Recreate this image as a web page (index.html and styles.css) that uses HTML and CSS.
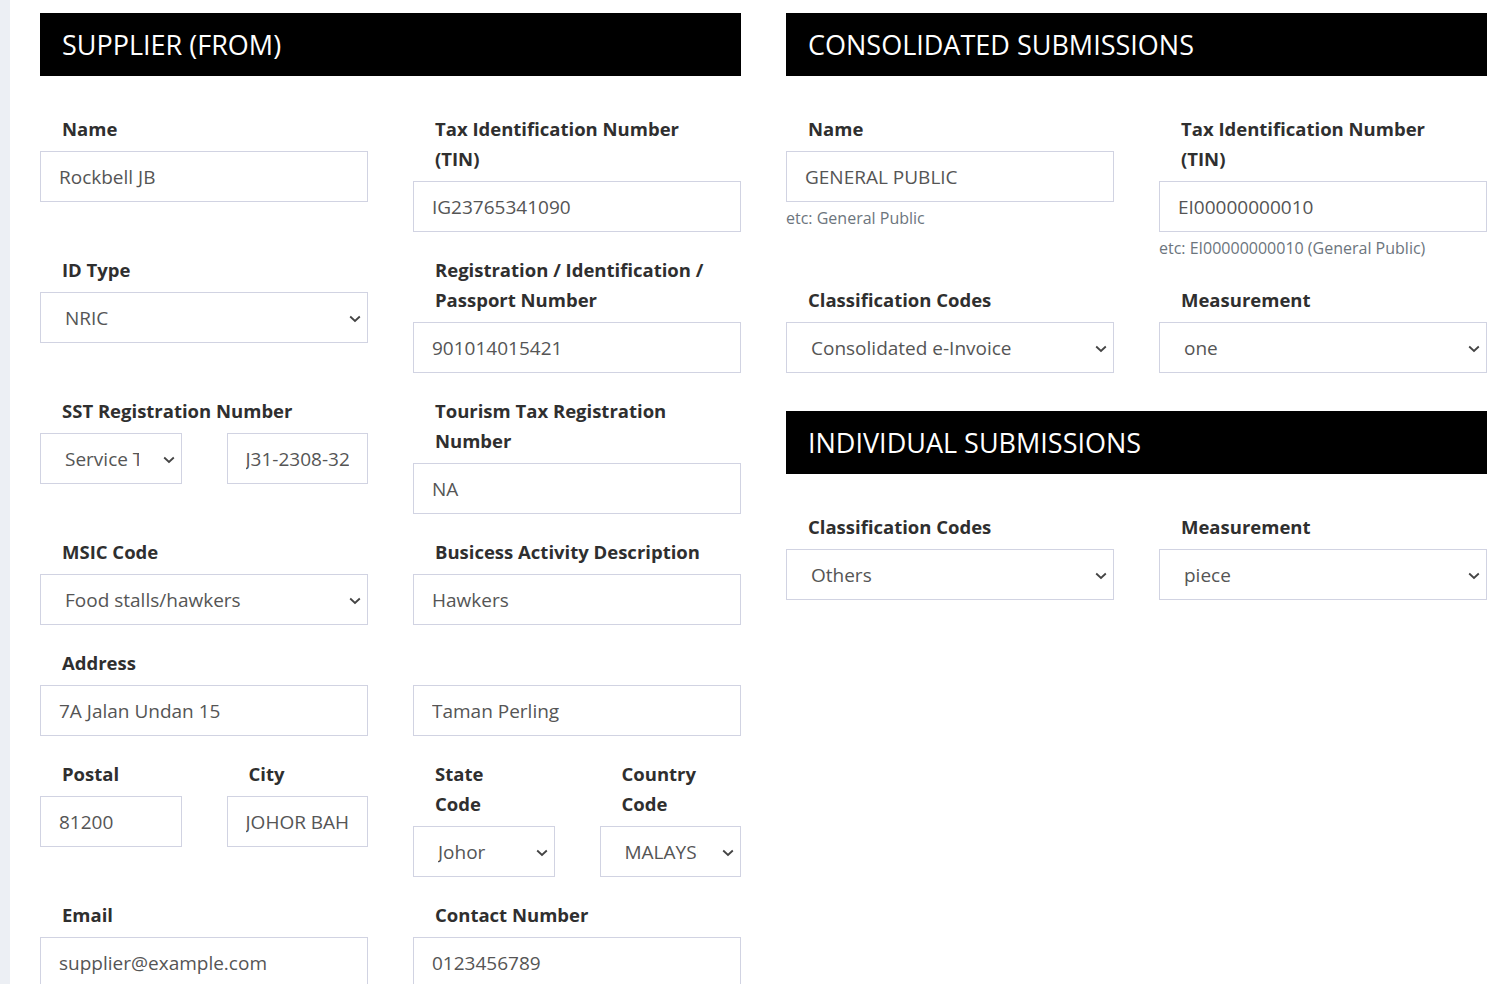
FILE: index.html
```html
<!DOCTYPE html>
<html lang="en">
<head>
<meta charset="utf-8">
<title>E-Invoice Settings</title>
<link rel="stylesheet" href="styles.css">
</head>
<body>
<div class="strip"></div>
<main class="main">
  <section class="panel">
    <h2 class="panel-title">SUPPLIER (FROM)</h2>
    <div class="form-grid">
      <div class="field">
        <label class="label">Name</label>
        <input class="control" type="text" value="Rockbell JB">
      </div>
      <div class="field">
        <label class="label">Tax Identification Number (TIN)</label>
        <input class="control" type="text" value="IG23765341090">
      </div>
      <div class="field">
        <label class="label">ID Type</label>
        <div class="select-wrap">
          <select class="control select"><option>NRIC</option></select>
          <svg class="chev" width="12" height="8" viewBox="0 0 12 8"><path d="M1.2 1.5 6 6 10.8 1.5" fill="none" stroke="#444" stroke-width="1.8"/></svg>
        </div>
      </div>
      <div class="field">
        <label class="label">Registration / Identification / Passport Number</label>
        <input class="control" type="text" value="901014015421">
      </div>
      <div class="field">
        <label class="label">SST Registration Number</label>
        <div class="split">
          <div class="select-wrap">
            <select class="control select"><option>Service Tax</option></select>
            <svg class="chev" width="12" height="8" viewBox="0 0 12 8"><path d="M1.2 1.5 6 6 10.8 1.5" fill="none" stroke="#444" stroke-width="1.8"/></svg>
          </div>
          <input class="control" type="text" value="J31-2308-32000001">
        </div>
      </div>
      <div class="field">
        <label class="label">Tourism Tax Registration Number</label>
        <input class="control" type="text" value="NA">
      </div>
      <div class="field">
        <label class="label">MSIC Code</label>
        <div class="select-wrap">
          <select class="control select"><option>Food stalls/hawkers</option></select>
          <svg class="chev" width="12" height="8" viewBox="0 0 12 8"><path d="M1.2 1.5 6 6 10.8 1.5" fill="none" stroke="#444" stroke-width="1.8"/></svg>
        </div>
      </div>
      <div class="field">
        <label class="label">Busicess Activity Description</label>
        <input class="control" type="text" value="Hawkers">
      </div>
      <div class="field wide">
        <label class="label">Address</label>
        <div class="split">
          <input class="control" type="text" value="7A Jalan Undan 15">
          <input class="control" type="text" value="Taman Perling">
        </div>
      </div>
      <div class="split">
        <div class="field">
          <label class="label">Postal</label>
          <input class="control" type="text" value="81200">
        </div>
        <div class="field">
          <label class="label">City</label>
          <input class="control" type="text" value="JOHOR BAHRU">
        </div>
      </div>
      <div class="split">
        <div class="field">
          <label class="label">State Code</label>
          <div class="select-wrap">
            <select class="control select"><option>Johor</option></select>
            <svg class="chev" width="12" height="8" viewBox="0 0 12 8"><path d="M1.2 1.5 6 6 10.8 1.5" fill="none" stroke="#444" stroke-width="1.8"/></svg>
          </div>
        </div>
        <div class="field">
          <label class="label">Country Code</label>
          <div class="select-wrap">
            <select class="control select"><option>MALAYSIA</option></select>
            <svg class="chev" width="12" height="8" viewBox="0 0 12 8"><path d="M1.2 1.5 6 6 10.8 1.5" fill="none" stroke="#444" stroke-width="1.8"/></svg>
          </div>
        </div>
      </div>
      <div class="field">
        <label class="label">Email</label>
        <input class="control" type="text" value="supplier@example.com">
      </div>
      <div class="field">
        <label class="label">Contact Number</label>
        <input class="control" type="text" value="0123456789">
      </div>
    </div>
  </section>

  <section class="panel">
    <h2 class="panel-title">CONSOLIDATED SUBMISSIONS</h2>
    <div class="form-grid">
      <div class="field">
        <label class="label">Name</label>
        <input class="control" type="text" value="GENERAL PUBLIC">
        <p class="help">etc: General Public</p>
      </div>
      <div class="field">
        <label class="label">Tax Identification Number (TIN)</label>
        <input class="control" type="text" value="EI00000000010">
        <p class="help">etc: EI00000000010 (General Public)</p>
      </div>
      <div class="field">
        <label class="label">Classification Codes</label>
        <div class="select-wrap">
          <select class="control select"><option>Consolidated e-Invoice</option></select>
          <svg class="chev" width="12" height="8" viewBox="0 0 12 8"><path d="M1.2 1.5 6 6 10.8 1.5" fill="none" stroke="#444" stroke-width="1.8"/></svg>
        </div>
      </div>
      <div class="field">
        <label class="label">Measurement</label>
        <div class="select-wrap">
          <select class="control select"><option>one</option></select>
          <svg class="chev" width="12" height="8" viewBox="0 0 12 8"><path d="M1.2 1.5 6 6 10.8 1.5" fill="none" stroke="#444" stroke-width="1.8"/></svg>
        </div>
      </div>
    </div>

    <h2 class="panel-title section-gap">INDIVIDUAL SUBMISSIONS</h2>
    <div class="form-grid">
      <div class="field">
        <label class="label">Classification Codes</label>
        <div class="select-wrap">
          <select class="control select"><option>Others</option></select>
          <svg class="chev" width="12" height="8" viewBox="0 0 12 8"><path d="M1.2 1.5 6 6 10.8 1.5" fill="none" stroke="#444" stroke-width="1.8"/></svg>
        </div>
      </div>
      <div class="field">
        <label class="label">Measurement</label>
        <div class="select-wrap">
          <select class="control select"><option>piece</option></select>
          <svg class="chev" width="12" height="8" viewBox="0 0 12 8"><path d="M1.2 1.5 6 6 10.8 1.5" fill="none" stroke="#444" stroke-width="1.8"/></svg>
        </div>
      </div>
    </div>
  </section>
</main>
</body>
</html>
```
FILE: styles.css
```css
* { box-sizing: border-box; }

html, body {
  margin: 0;
  height: 100%;
  overflow: hidden;
}

body {
  display: flex;
  background: #fff;
  font-family: "Open Sans", "Noto Sans", "Liberation Sans", sans-serif;
  color: #333;
}

.strip {
  width: 10px;
  flex: none;
  background: #eceff4;
}

.main {
  flex: 1;
  display: grid;
  grid-template-columns: 701px 701px;
  column-gap: 45px;
  align-items: start;
  padding: 13px 0 0 30px;
}

.panel-title {
  margin: 0;
  height: 63px;
  display: flex;
  align-items: center;
  padding-left: 22px;
  background: #000;
  color: #fff;
  font-size: 27px;
  font-weight: 400;
}

.section-gap { margin-top: 38px; }

.form-grid {
  margin-top: 38px;
  display: grid;
  grid-template-columns: 1fr 1fr;
  column-gap: 45px;
  row-gap: 23px;
  align-items: start;
}

.field { min-width: 0; }

.wide { grid-column: 1 / -1; }

.split {
  display: grid;
  grid-template-columns: 1fr 1fr;
  column-gap: 45px;
  align-items: start;
  min-width: 0;
}

.label {
  display: block;
  padding: 0 22px;
  margin-bottom: 7px;
  font-size: 18.5px;
  font-weight: 700;
  line-height: 30px;
  color: #2f2f2f;
}

.control {
  display: block;
  width: 100%;
  height: 51px;
  margin: 0;
  padding: 0 18px;
  border: 1px solid #d1d3e2;
  border-radius: 0;
  background: #fff;
  font-family: inherit;
  font-size: 19px;
  color: #555;
  outline: none;
}

.select-wrap {
  position: relative;
  min-width: 0;
}

.select {
  appearance: none;
  -webkit-appearance: none;
  padding-left: 24px;
  padding-right: 42px;
}

.chev {
  position: absolute;
  right: 7px;
  top: 50%;
  margin-top: -3px;
  pointer-events: none;
}

.help {
  margin: 4px 0 0;
  padding-bottom: 2px;
  font-size: 16px;
  line-height: 24px;
  color: #6c757d;
}
```
